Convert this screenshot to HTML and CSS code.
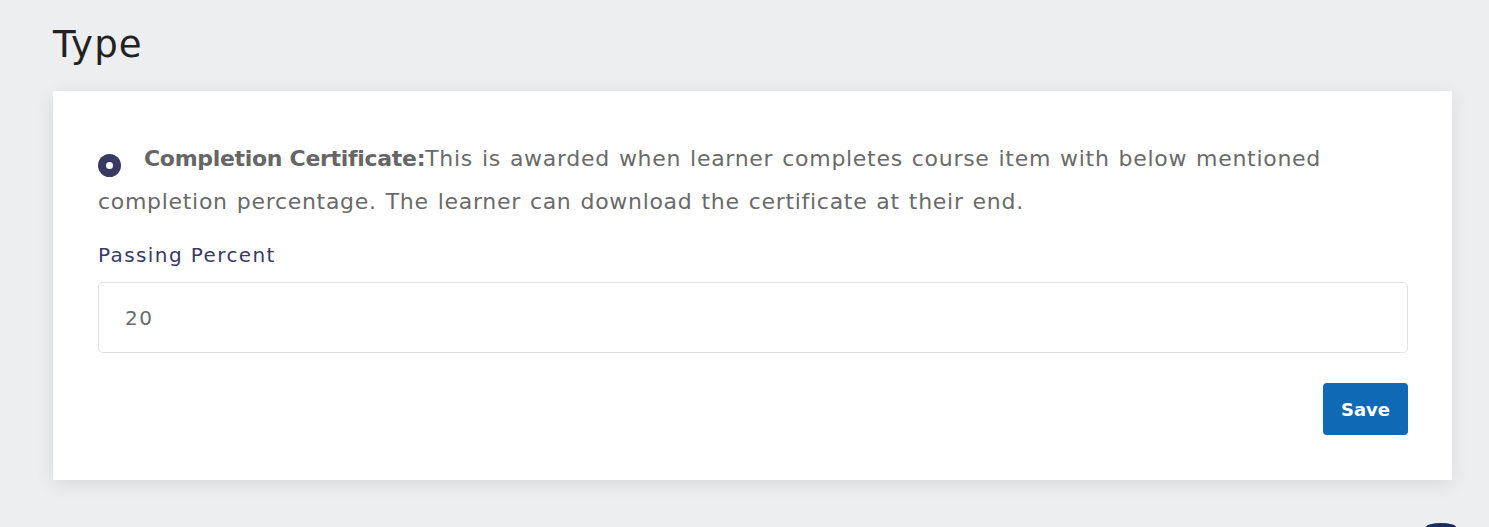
FILE: index.html
```html
<!DOCTYPE html>
<html>
<head>
<meta charset="utf-8">
<link rel="stylesheet" href="styles.css">
</head>
<body>
<div class="page">
  <h1 class="title">Type</h1>
  <div class="card">
    <p class="option">
      <span class="radio"><span class="radio-dot"></span></span><strong class="option-name">Completion Certificate:</strong>This is awarded when learner completes course item with below mentioned completion percentage. The learner can download the certificate at their end.
    </p>
    <label class="label" for="pp">Passing Percent</label>
    <input class="input" id="pp" type="text" value="20">
    <div class="actions">
      <button class="btn">Save</button>
    </div>
  </div>
</div>
<div class="fab"></div>
</body>
</html>
```

FILE: styles.css
```css
html, body {
  margin: 0;
  padding: 0;
  background: #edeef0;
  height: 527px;
  overflow: hidden;
}
body {
  font-family: "DejaVu Sans", "Noto Sans", sans-serif;
  position: relative;
}
.page {
  padding: 20px 37px 0 53px;
}
.title {
  margin: 0 0 22px 0;
  font-size: 37px;
  font-weight: 400;
  color: #222222;
  line-height: 49px;
  letter-spacing: 1.2px;
}
.card {
  background: #ffffff;
  box-shadow: 0 4px 18px rgba(0, 0, 0, 0.09);
  padding: 46px 44px 45px 45px;
}
.option {
  margin: 0;
  font-size: 22px;
  line-height: 43px;
  color: #6a6a6a;
  letter-spacing: 0.7px;
  word-spacing: 1.3px;
}
.radio {
  display: inline-flex;
  align-items: center;
  justify-content: center;
  width: 23px;
  height: 23px;
  border-radius: 50%;
  background: #393a64;
  vertical-align: -3px;
  margin-right: 23px;
}
.radio-dot {
  width: 7px;
  height: 7px;
  border-radius: 50%;
  background: #ffffff;
}
.option-name {
  font-weight: 700;
  color: #666666;
  letter-spacing: -0.3px;
  word-spacing: 0;
}
.label {
  display: block;
  margin-top: 17px;
  font-size: 20px;
  line-height: 30px;
  color: #393a64;
  letter-spacing: 1.4px;
}
.input {
  display: block;
  box-sizing: border-box;
  width: 100%;
  height: 71px;
  margin-top: 12px;
  border: 1px solid #e1e2e8;
  border-radius: 5px;
  padding: 0 26px;
  font-family: "DejaVu Sans", "Noto Sans", sans-serif;
  font-size: 20px;
  letter-spacing: 1.5px;
  color: #6a6a6a;
  outline: none;
}
.actions {
  display: flex;
  justify-content: flex-end;
  margin-top: 30px;
}
.btn {
  width: 85px;
  height: 52px;
  border: none;
  border-radius: 4px;
  background: #0f69b4;
  color: #ffffff;
  font-family: "DejaVu Sans", "Noto Sans", sans-serif;
  font-size: 18px;
  font-weight: 700;
  cursor: pointer;
}
.fab {
  position: absolute;
  left: 1426px;
  bottom: 0;
  width: 30px;
  height: 4px;
  border-radius: 50% 50% 0 0 / 100% 100% 0 0;
  background: #1b2b58;
}
```
